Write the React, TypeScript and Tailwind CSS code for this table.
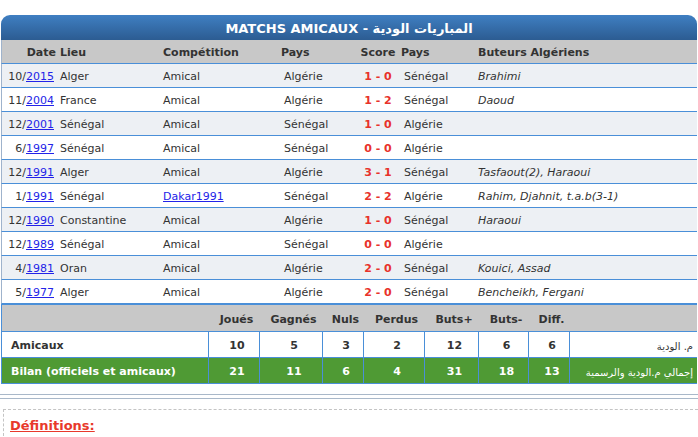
const matches = [
  { m: '10', y: '2015', lieu: 'Alger', comp: 'Amical', p1: 'Algérie', score: '1 - 0', p2: 'Sénégal', buteurs: 'Brahimi' },
  { m: '11', y: '2004', lieu: 'France', comp: 'Amical', p1: 'Algérie', score: '1 - 2', p2: 'Sénégal', buteurs: 'Daoud' },
  { m: '12', y: '2001', lieu: 'Sénégal', comp: 'Amical', p1: 'Sénégal', score: '1 - 0', p2: 'Algérie', buteurs: '' },
  { m: '6', y: '1997', lieu: 'Sénégal', comp: 'Amical', p1: 'Sénégal', score: '0 - 0', p2: 'Algérie', buteurs: '' },
  { m: '12', y: '1991', lieu: 'Alger', comp: 'Amical', p1: 'Algérie', score: '3 - 1', p2: 'Sénégal', buteurs: 'Tasfaout(2), Haraoui' },
  { m: '1', y: '1991', lieu: 'Sénégal', comp: 'Dakar1991', link: true, p1: 'Sénégal', score: '2 - 2', p2: 'Algérie', buteurs: 'Rahim, Djahnit, t.a.b(3-1)' },
  { m: '12', y: '1990', lieu: 'Constantine', comp: 'Amical', p1: 'Algérie', score: '1 - 0', p2: 'Sénégal', buteurs: 'Haraoui' },
  { m: '12', y: '1989', lieu: 'Sénégal', comp: 'Amical', p1: 'Sénégal', score: '0 - 0', p2: 'Algérie', buteurs: '' },
  { m: '4', y: '1981', lieu: 'Oran', comp: 'Amical', p1: 'Algérie', score: '2 - 0', p2: 'Sénégal', buteurs: 'Kouici, Assad' },
  { m: '5', y: '1977', lieu: 'Alger', comp: 'Amical', p1: 'Algérie', score: '2 - 0', p2: 'Sénégal', buteurs: 'Bencheikh, Fergani' },
];

const statHeads = ['Joués', 'Gagnés', 'Nuls', 'Perdus', 'Buts+', 'Buts-', 'Diff.'];

const rowCols = 'grid grid-cols-[55px_103px_121px_76px_42px_76px_1fr]';
const statCols = 'grid grid-cols-[207px_51px_63px_41px_61px_54px_50px_41px_1fr]';

function StatRow({ label, values, arabic, green }: { label: string; values: number[]; arabic: string; green?: boolean }) {
  return (
    <div
      className={`${statCols} h-[26px] border-b border-[#4a8fd8] font-bold ${
        green ? 'bg-[#4f9a34] text-white' : 'bg-white text-[#333]'
      }`}
    >
      <div className="flex items-center border-r border-[#4a8fd8] pl-[9px] pt-[4px]">{label}</div>
      {values.map((v, i) => (
        <div key={i} className="flex items-center justify-center border-r border-[#4a8fd8] pl-[6px] pt-[4px]">
          {v}
        </div>
      ))}
      <div dir="rtl" className="flex items-center pr-[4px] pt-[3px] text-[10px] font-normal">
        {arabic}
      </div>
    </div>
  );
}

export default function App() {
  return (
    <div className="min-h-[437px] bg-white pt-[15px] text-[11px] text-[#333] font-['DejaVu_Sans',Verdana,sans-serif]">
      <div className="ml-[1px] w-[696px]">
        {/* title */}
        <div className="flex h-[25px] items-center justify-center rounded-t-[9px] bg-gradient-to-b from-[#3f7fc2] to-[#2c5c92] pt-[2px] text-[13px] font-bold text-white">
          MATCHS AMICAUX - المباريات الودية
        </div>

        {/* header */}
        <div className={`${rowCols} h-[24px] items-center border-b border-l border-[#4a8fd8] border-l-[#9fb3cc] bg-[#c8c8c8] pt-[4px] font-bold`}>
          <div className="pr-[1px] text-right">Date</div>
          <div className="pl-[3px]">Lieu</div>
          <div className="pl-[3px]">Compétition</div>
          <div>Pays</div>
          <div className="text-center">Score</div>
          <div className="pl-[2px]">Pays</div>
          <div className="pl-[3px]">Buteurs Algériens</div>
        </div>

        {/* rows */}
        {matches.map((r, i) => (
          <div
            key={i}
            className={`${rowCols} h-[24px] items-center border-b border-l border-[#4a8fd8] border-l-[#9fb3cc] pt-[4px] ${
              i % 2 === 0 ? 'bg-[#edf0f4]' : 'bg-white'
            }`}
          >
            <div className="pr-[3px] text-right">
              {r.m}/<a href="#" className="text-[#2323e8] underline">{r.y}</a>
            </div>
            <div className="pl-[3px]">{r.lieu}</div>
            <div className="pl-[3px]">
              {r.link ? <a href="#" className="text-[#2323e8] underline">{r.comp}</a> : r.comp}
            </div>
            <div className="pl-[3px]">{r.p1}</div>
            <div className="text-center font-bold text-[#e8322b]">{r.score}</div>
            <div className="pl-[5px]">{r.p2}</div>
            <div className="pl-[3px] italic">{r.buteurs}</div>
          </div>
        ))}

        {/* bilan */}
        <div className="border-l border-t border-[#4a8fd8]">
          <div className={`${statCols} h-[27px] border-b border-[#4a8fd8] bg-[#c8c8c8] font-bold`}>
            <div />
            {statHeads.map((h) => (
              <div key={h} className="flex items-center justify-center pl-[4px] pt-[4px]">
                {h}
              </div>
            ))}
            <div />
          </div>
          <StatRow label="Amicaux" values={[10, 5, 3, 2, 12, 6, 6]} arabic="م. الودية" />
          <StatRow
            label="Bilan (officiels et amicaux)"
            values={[21, 11, 6, 4, 31, 18, 13]}
            arabic="إجمالي م.الودية والرسمية"
            green
          />
        </div>
      </div>

      <div className="mt-[10px] h-[5px] border-y border-[#a9b8c9]" />

      <div className="ml-[3px] mt-[10px] border-l border-t border-dashed border-[#c4c4c4] pl-[6px] pt-[6px]">
        <span className="text-[13px] font-bold text-[#e8392b] underline">Définitions:</span>
      </div>
    </div>
  );
}
